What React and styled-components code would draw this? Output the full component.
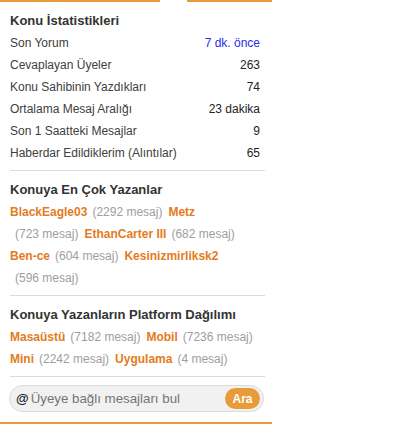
import React from "react";
import styled, { createGlobalStyle } from "styled-components";

const Global = createGlobalStyle`
  html, body { margin: 0; padding: 0; background: #fff; }
  body { font-family: "Liberation Sans", Arial, sans-serif; }
  * { box-sizing: border-box; }
`;

const Panel = styled.div`
  width: 272px;
  border-bottom: 2px solid #e89b3a;
  font-family: "Liberation Sans", Arial, sans-serif;
`;

const TopBar = styled.div`
  display: flex;
  height: 2px;
  gap: 27px;
`;

const TopSegment = styled.div`
  height: 2px;
  background: #e89b3a;
  flex: ${(p) => (p.$w ? `0 0 ${p.$w}px` : "1 1 auto")};
`;

const Section = styled.div`
  margin: 0 7px 0 10px;
  padding: 10px 0 6px;
  border-bottom: 1px solid #dcdcdc;
`;

const Title = styled.h3`
  margin: 0 0 2px;
  font-size: 13px;
  line-height: 18px;
  font-weight: bold;
  color: #333;
`;

const Row = styled.div`
  display: flex;
  justify-content: space-between;
  align-items: center;
  height: 22px;
  padding-right: 5px;
  font-size: 12px;
  color: #404040;
`;

const Value = styled.span`
  color: ${(p) => (p.$link ? "#2b2bea" : "#222")};
`;

const List = styled.div`
  padding-right: 2px;
  font-size: 12px;
  line-height: 22px;
`;

const Name = styled.a`
  display: inline-block;
  font-weight: bold;
  color: #e47b22;
  text-decoration: none;
  cursor: pointer;
`;

const Count = styled.span`
  display: inline-block;
  margin: 0 6px 0 5px;
  color: #9e9e9e;
`;

const SearchWrap = styled.div`
  padding: 8px 8px 10px 9px;
`;

const SearchBox = styled.div`
  display: flex;
  align-items: center;
  height: 27px;
  padding: 0 3px 0 6px;
  border: 1px solid #dadada;
  border-radius: 14px;
  background: #f1f1f1;
`;

const At = styled.span`
  font-size: 13px;
  font-weight: bold;
  color: #222;
  margin-right: 2px;
`;

const Input = styled.input`
  flex: 1;
  min-width: 0;
  border: 0;
  outline: 0;
  background: transparent;
  padding: 0;
  font-family: "Liberation Sans", Arial, sans-serif;
  font-size: 13.3px;
  color: #333;
  &::placeholder { color: #757575; opacity: 1; }
`;

const Button = styled.button`
  flex: 0 0 35px;
  height: 21px;
  border: 0;
  border-radius: 11px;
  background: #e89b38;
  color: #fff;
  font-family: "Liberation Sans", Arial, sans-serif;
  font-size: 12px;
  font-weight: bold;
  padding: 0;
  cursor: pointer;
`;

const stats = [
  ["Son Yorum", "7 dk. önce", true],
  ["Cevaplayan Üyeler", "263"],
  ["Konu Sahibinin Yazdıkları", "74"],
  ["Ortalama Mesaj Aralığı", "23 dakika"],
  ["Son 1 Saatteki Mesajlar", "9"],
  ["Haberdar Edildiklerim (Alıntılar)", "65"],
];

const writers = [
  ["BlackEagle03", 2292],
  ["Metz", 723],
  ["EthanCarter III", 682],
  ["Ben-ce", 604],
  ["Kesinizmirliksk2", 596],
];

const platforms = [
  ["Masaüstü", 7182],
  ["Mobil", 7236],
  ["Mini", 2242],
  ["Uygulama", 4],
];

const Entries = ({ items }) => (
  <List>
    {items.map(([n, c]) => (
      <React.Fragment key={n}>
        <Name>{n}</Name>
        <Count>({c} mesaj)</Count>
      </React.Fragment>
    ))}
  </List>
);

export default function App() {
  return (
    <>
      <Global />
      <Panel>
        <TopBar>
          <TopSegment $w={160} />
          <TopSegment />
        </TopBar>
        <Section>
          <Title>Konu İstatistikleri</Title>
          {stats.map(([l, v, link]) => (
            <Row key={l}>
              <span>{l}</span>
              <Value $link={link}>{v}</Value>
            </Row>
          ))}
        </Section>
        <Section>
          <Title>Konuya En Çok Yazanlar</Title>
          <Entries items={writers} />
        </Section>
        <Section>
          <Title>Konuya Yazanların Platform Dağılımı</Title>
          <Entries items={platforms} />
        </Section>
        <SearchWrap>
          <SearchBox>
            <At>@</At>
            <Input placeholder="Üyeye bağlı mesajları bul" />
            <Button>Ara</Button>
          </SearchBox>
        </SearchWrap>
      </Panel>
    </>
  );
}
